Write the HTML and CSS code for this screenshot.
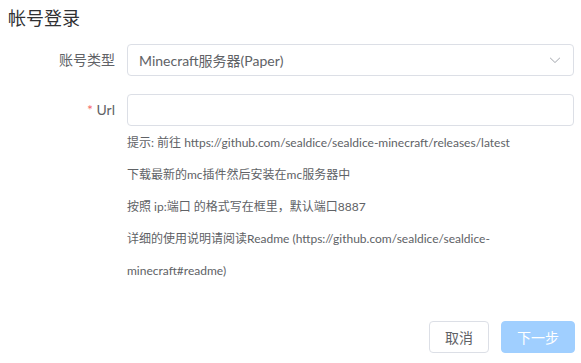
FILE: index.html
```html
<!DOCTYPE html>
<html lang="zh-CN">
<head>
  <meta charset="UTF-8" />
  <meta name="viewport" content="width=device-width, initial-scale=1.0" />
  <title>帐号登录</title>
  <link rel="stylesheet" href="styles.css">
</head>
<body>
  <div class="dialog">
    <h2 class="title">帐号登录</h2>

    <form class="form" onsubmit="return false">
      <div class="form-item">
        <label class="label">账号类型</label>
        <div class="content">
          <div class="select">
            <span class="select-value">Minecraft服务器(Paper)</span>
            <svg class="arrow" viewBox="0 0 1024 1024" width="14" height="14">
              <path fill="currentColor" d="M831.872 340.864 512 652.672 192.128 340.864a30.592 30.592 0 0 0-42.752 0 29.12 29.12 0 0 0 0 41.6L489.664 714.24a32 32 0 0 0 44.672 0l340.288-331.712a29.12 29.12 0 0 0 0-41.728 30.592 30.592 0 0 0-42.752 0z"/>
            </svg>
          </div>
        </div>
      </div>

      <div class="form-item">
        <label class="label"><span class="star">*</span> Url</label>
        <div class="content">
          <input class="input" type="text" />
          <div class="help">
            <div>提示: 前往 https://github.com/sealdice/sealdice-minecraft/releases/latest</div>
            <div>下载最新的mc插件然后安装在mc服务器中</div>
            <div>按照 ip:端口 的格式写在框里，默认端口8887</div>
            <div class="help-wrap">详细的使用说明请阅读Readme (https://github.com/sealdice/sealdice-minecraft#readme)</div>
          </div>
        </div>
      </div>
    </form>

    <div class="footer">
      <button class="btn">取消</button>
      <button class="btn btn-primary" disabled>下一步</button>
    </div>
  </div>
</body>
</html>
```

FILE: styles.css
```css
body {
  margin: 0;
  background: #fff;
  color: #606266;
  font-family: Lato, "Noto Sans CJK SC", sans-serif;
}

.dialog {
  padding: 6px 7px 0 8px;
}

.title {
  margin: 0;
  font-size: 18px;
  font-weight: normal;
  line-height: 24px;
  color: #303133;
}

.form {
  margin-top: 14px;
}

.form-item {
  display: flex;
  margin-bottom: 18px;
}

.form-item:last-child {
  margin-bottom: 0;
}

.label {
  width: 119px;
  box-sizing: border-box;
  padding-right: 12px;
  text-align: right;
  font-size: 14px;
  line-height: 32px;
  color: #606266;
}

.star {
  color: #f56c6c;
}

.content {
  flex: 1;
  display: flex;
  flex-direction: column;
}

.select,
.input {
  height: 32px;
  box-sizing: border-box;
  border: 1px solid #dcdfe6;
  border-radius: 4px;
  background: #fff;
}

.select {
  display: flex;
  align-items: center;
  justify-content: space-between;
  padding: 0 11px;
}

.select-value {
  font-size: 14px;
  color: #606266;
}

.arrow {
  color: #a8abb2;
}

.input {
  width: 100%;
  margin: 0;
  padding: 0 11px;
  font: inherit;
  outline: none;
}

.help {
  margin-top: 1px;
  font-size: 12px;
  line-height: 32px;
  color: #606266;
}

.help-wrap {
  max-width: 370px;
}

.footer {
  display: flex;
  justify-content: flex-end;
  gap: 12px;
  margin-top: 34px;
  margin-right: -1px;
}

.btn {
  height: 32px;
  padding: 0 15px;
  border: 1px solid #dcdfe6;
  border-radius: 4px;
  background: #fff;
  color: #606266;
  font-family: inherit;
  font-size: 14px;
  cursor: pointer;
}

.btn-primary {
  background: #a0cfff;
  border-color: #a0cfff;
  color: #fff;
  cursor: not-allowed;
}
```
